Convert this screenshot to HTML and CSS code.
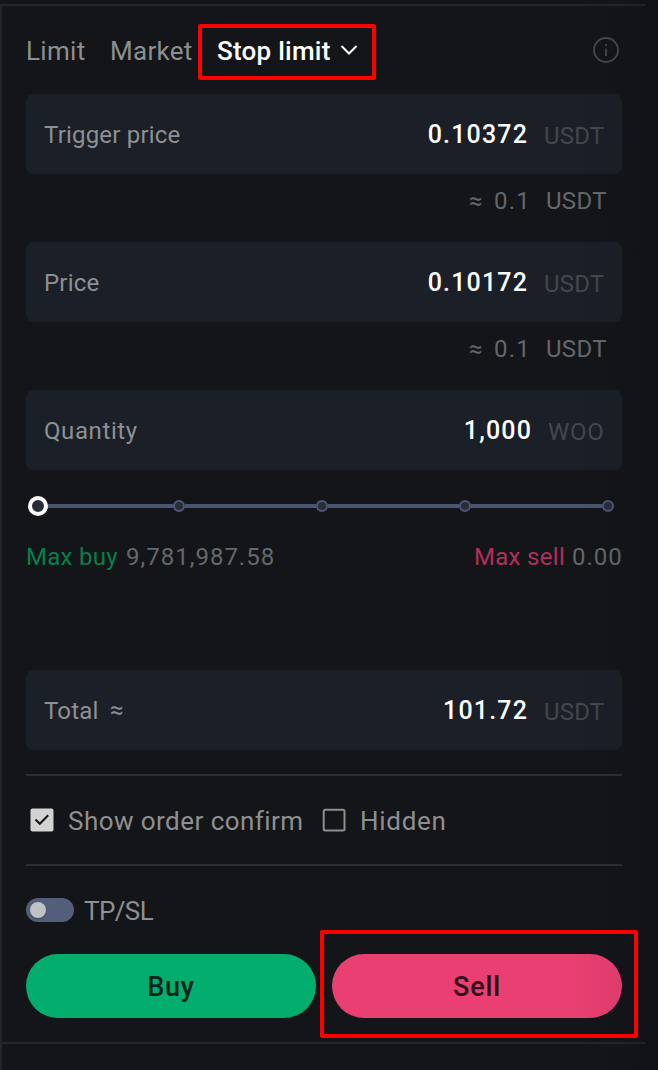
FILE: index.html
```html
<!DOCTYPE html>
<html lang="en">
<head>
  <meta charset="UTF-8">
  <meta name="viewport" content="width=device-width, initial-scale=1.0">
  <title>Stop limit order</title>
  <link rel="stylesheet" href="styles.css">
</head>
<body>

<div class="page">
  <div class="panel">
    <!-- Order type tabs -->
    <div class="tabs">
      <span class="tab tab-limit">Limit</span>
      <span class="tab tab-market">Market</span>
      <div class="tab-active">
        <span class="tab tab-stop">Stop limit</span>
        <svg class="chevron" width="18" height="12" viewBox="0 0 18 12"><path d="M1.5 2 L9 9.5 L16.5 2" fill="none" stroke="#fff" stroke-width="2"/></svg>
      </div>
      <svg class="info" width="26" height="26" viewBox="0 0 26 26">
        <circle cx="13" cy="13" r="12" fill="none" stroke="#48494c" stroke-width="1.8"/>
        <path d="M13 11.5 V19" stroke="#48494c" stroke-width="1.8"/>
        <circle cx="13" cy="8" r="1.1" fill="#48494c"/>
      </svg>
    </div>

    <!-- Inputs -->
    <div class="field">
      <span class="label label-trigger">Trigger price</span>
      <span class="value">0.10372</span>
      <span class="unit">USDT</span>
    </div>
    <div class="approx">
      <span class="approx-sign">≈</span>
      <span class="approx-value">0.1</span>
      <span class="approx-unit">USDT</span>
    </div>

    <div class="field">
      <span class="label label-price">Price</span>
      <span class="value">0.10172</span>
      <span class="unit">USDT</span>
    </div>
    <div class="approx">
      <span class="approx-sign">≈</span>
      <span class="approx-value">0.1</span>
      <span class="approx-unit">USDT</span>
    </div>

    <div class="field">
      <span class="label label-quantity">Quantity</span>
      <span class="value value-quantity">1,000</span>
      <span class="unit unit-woo">WOO</span>
    </div>

    <!-- Slider -->
    <div class="slider">
      <span class="handle"></span>
      <span class="track track-first"></span>
      <span class="dot"></span>
      <span class="track"></span>
      <span class="dot"></span>
      <span class="track"></span>
      <span class="dot"></span>
      <span class="track"></span>
      <span class="dot"></span>
    </div>

    <div class="max">
      <span class="max-buy">Max buy</span>
      <span class="max-value">9,781,987.58</span>
      <span class="max-sell">Max sell</span>
      <span class="max-value max-zero">0.00</span>
    </div>

    <div class="field field-total">
      <span class="label label-total">Total</span>
      <span class="approx-sign total-sign">≈</span>
      <span class="value">101.72</span>
      <span class="unit">USDT</span>
    </div>

    <!-- Options -->
    <div class="options">
      <svg class="box" width="24" height="24" viewBox="0 0 24 24">
        <rect x="0.5" y="0.5" width="23" height="23" rx="2" fill="#d2d2d3"/>
        <path d="M5.5 11.5 L9.8 15.8 L18.2 7.2" fill="none" stroke="#141519" stroke-width="2"/>
      </svg>
      <span class="option option-confirm">Show order confirm</span>
      <svg class="box" width="24" height="24" viewBox="0 0 24 24">
        <rect x="1.7" y="1.7" width="20.8" height="20.8" rx="1.5" fill="none" stroke="#8e8f91" stroke-width="2"/>
      </svg>
      <span class="option option-hidden">Hidden</span>
    </div>

    <div class="tpsl">
      <span class="toggle"><span class="knob"></span></span>
      <span class="option option-tpsl">TP/SL</span>
    </div>

    <!-- Buttons -->
    <div class="actions">
      <div class="button buy">Buy</div>
      <div class="button sell">Sell</div>
      <span class="sell-frame"></span>
    </div>
  </div>
  <div class="shade"></div>
</div>

</body>
</html>
```
FILE: styles.css
```css
body {
  margin: 0;
  background-color: #141519;
  font-family: Roboto, "Noto Sans", sans-serif;
  font-weight: 450;
}
.page {
  position: relative;
  box-sizing: border-box;
  width: 658px;
  height: 1070px;
  padding-top: 4px;
  overflow: hidden;
  background: linear-gradient(#25262a, #25262a) 0 4px / 2px 1066px no-repeat;
}
.panel {
  box-sizing: border-box;
  width: 646px;
  height: 1040px;
  padding: 18px 24px 0 26px;
  border-top: 2px solid #25262a;
  border-bottom: 2px solid #25262a;
}
.tabs {
  display: flex;
  align-items: center;
  width: 596px;
  height: 56px;
  margin-bottom: 14px;
  color: #8d8e90;
  font-size: 26px;
}
.tab {
  padding-bottom: 2px;
  white-space: nowrap;
}
.tab-limit {
  width: 84px;
  letter-spacing: 0.3px;
}
.tab-market {
  width: 88px;
  letter-spacing: 0.3px;
}
.tab-active {
  display: flex;
  align-items: center;
  box-sizing: border-box;
  width: 178px;
  height: 56px;
  padding-left: 15px;
  border: 4px solid #ff0000;
  border-radius: 2px;
  color: #fff;
}
.tab-stop {
  width: 123px;
  font-weight: 500;
  letter-spacing: 0.25px;
}
.chevron {
  margin-top: -4px;
}
.info {
  margin-left: auto;
  margin-right: 3px;
  margin-top: -4px;
}
.field {
  display: flex;
  align-items: center;
  box-sizing: border-box;
  width: 596px;
  height: 80px;
  padding: 0 18px;
  border-radius: 7px;
  background-color: #1b1f27;
}
.label {
  padding-top: 2px;
  color: #8e9093;
  font-size: 24px;
  letter-spacing: 0.2px;
}
.label-quantity {
  letter-spacing: 0.6px;
}
.value {
  margin-left: auto;
  color: #fff;
  font-size: 25px;
  font-weight: 500;
  letter-spacing: 1.15px;
}
.unit {
  width: 60px;
  margin-left: 16px;
  padding-top: 3px;
  color: #44474c;
  font-size: 24px;
  letter-spacing: 0.2px;
  white-space: nowrap;
}
.unit-woo {
  width: 56px;
  letter-spacing: 0.7px;
}
.approx {
  display: flex;
  justify-content: flex-end;
  align-items: center;
  width: 580px;
  height: 54px;
  margin-bottom: 14px;
  color: #66676a;
  font-size: 24px;
}
.approx-sign {
  width: 14px;
  margin-right: 11px;
  font-size: 24px;
}
.approx-value {
  width: 35px;
  margin-right: 17px;
  letter-spacing: 1.2px;
}
.approx-unit {
  width: 60px;
  letter-spacing: 0.3px;
}
.slider {
  display: flex;
  align-items: center;
  width: 586px;
  height: 20px;
  margin: 26px 0 0 2px;
}
.handle {
  box-sizing: border-box;
  width: 20px;
  height: 20px;
  border: 4px solid #fff;
  border-radius: 50%;
  background-color: #282d3a;
}
.dot {
  box-sizing: border-box;
  width: 12px;
  height: 12px;
  border: 2px solid #4e5875;
  border-radius: 50%;
  background-color: #282d3a;
}
.track {
  width: 131px;
  height: 4px;
  background-color: #4c5570;
}
.track-first {
  width: 125px;
}
.max {
  display: flex;
  align-items: center;
  width: 596px;
  height: 40px;
  margin-top: 21px;
  font-size: 24px;
}
.max-buy {
  width: 100px;
  color: #067f4b;
  letter-spacing: 0.3px;
}
.max-value {
  color: #66676a;
  letter-spacing: 1px;
}
.max-sell {
  width: 98px;
  margin-left: auto;
  color: #b02f5b;
  letter-spacing: 0.3px;
}
.max-zero {
  width: 50px;
}
.field-total {
  margin-top: 93px;
}
.label-total {
  width: 66px;
}
.total-sign {
  color: #8e9093;
}
.options {
  display: flex;
  align-items: center;
  box-sizing: border-box;
  width: 596px;
  height: 92px;
  margin-top: 24px;
  padding-left: 4px;
  border-top: 2px solid #2d2e32;
  border-bottom: 2px solid #2d2e32;
}
.option {
  padding-top: 2px;
  color: #8e8f91;
  font-size: 26px;
  white-space: nowrap;
}
.option-confirm {
  width: 240px;
  margin-left: 14px;
  margin-right: 14px;
  letter-spacing: 0.45px;
}
.option-hidden {
  margin-left: 14px;
  letter-spacing: 0.7px;
}
.tpsl {
  display: flex;
  align-items: center;
  height: 24px;
  margin-top: 32px;
}
.toggle {
  display: flex;
  align-items: center;
  box-sizing: border-box;
  width: 48px;
  height: 24px;
  padding-left: 4px;
  border-radius: 12px;
  background-color: #535e7b;
}
.knob {
  width: 16px;
  height: 16px;
  border-radius: 50%;
  background-color: #bfc2c6;
  box-shadow: 0 1px 2px rgba(0, 0, 0, 0.25);
}
.option-tpsl {
  margin-left: 10px;
  letter-spacing: -0.6px;
}
.actions {
  position: relative;
  display: flex;
  gap: 16px;
  width: 596px;
  margin-top: 32px;
}
.button {
  display: flex;
  justify-content: center;
  align-items: center;
  box-sizing: border-box;
  width: 290px;
  height: 64px;
  padding-top: 2px;
  border-radius: 32px;
  font-size: 27px;
  font-weight: 500;
  letter-spacing: 0.8px;
}
.buy {
  background-color: #02ad6d;
  color: #04241a;
}
.sell {
  background-color: #ea3f72;
  color: #2d0b17;
}
/* highlight frame around the sell button */
.sell-frame {
  position: absolute;
  left: 294px;
  top: -24px;
  box-sizing: border-box;
  width: 318px;
  height: 108px;
  border: 4px solid #ff0000;
  border-radius: 2px;
}
.shade {
  position: absolute;
  top: 0;
  right: 0;
  width: 90px;
  height: 1070px;
  background: linear-gradient(to right, rgba(10, 11, 16, 0), rgba(10, 11, 16, 0.06) 60%, rgba(10, 11, 16, 0.3));
}
/* the frame is not dimmed by the shade */
.sell-frame {
  z-index: 1;
}
```
